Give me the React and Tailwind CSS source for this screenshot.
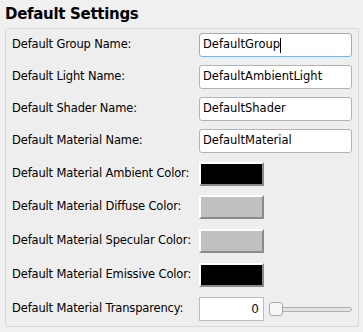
import React from 'react'

const textRows = [
  { label: 'Default Group Name:', value: 'DefaultGroup', focused: true },
  { label: 'Default Light Name:', value: 'DefaultAmbientLight' },
  { label: 'Default Shader Name:', value: 'DefaultShader' },
  { label: 'Default Material Name:', value: 'DefaultMaterial' },
]

const colorRows = [
  { label: 'Default Material Ambient Color:', color: '#000000', mt: 'mt-[9px]' },
  { label: 'Default Material Diffuse Color:', color: '#c0c0c0', mt: 'mt-[9px]' },
  { label: 'Default Material Specular Color:', color: '#c0c0c0', mt: 'mt-[10px]' },
  { label: 'Default Material Emissive Color:', color: '#000000', mt: 'mt-[10px]' },
]

function Row({ label, children, className = '' }) {
  return (
    <div className={`flex h-[24px] items-center ${className}`}>
      <div className="w-[193px] pl-[6px] whitespace-nowrap tracking-[-0.15px]">{label}</div>
      {children}
    </div>
  )
}

export default function App() {
  return (
    <div
      className="w-[363px] h-[332px] bg-[#f0f0f0] text-black overflow-hidden"
      style={{ fontFamily: '"DejaVu Sans", Tahoma, sans-serif' }}
    >
      <h1 className="pl-[5px] pt-[4px] h-[28px] text-[15px] font-bold leading-[20px] tracking-[-0.3px]">
        Default Settings
      </h1>
      <div className="ml-[5px] w-[354px] h-[299px] border border-[#d9d9d9] rounded-[3px] bg-[#eeeeee] pt-[4px] text-[11.5px]">
        {textRows.map((r, i) => (
          <Row key={r.label} label={r.label} className={i === 0 ? '' : 'mt-[8px]'}>
            <div
              className={`w-[153px] h-[24px] bg-white rounded-[3px] border flex items-center pl-[3px] text-[11.5px] ${
                r.focused ? 'border-[#7eb4ea]' : 'border-[#b4b4b4]'
              }`}
            >
              <span>{r.value}</span>
              {r.focused && <span className="w-px h-[15px] bg-black" />}
            </div>
          </Row>
        ))}
        {colorRows.map((r) => (
          <Row key={r.label} label={r.label} className={r.mt}>
            <div
              className="w-[65px] h-[24px] border-t-2 border-l-2 border-b-2 border-r-2 border-t-white border-l-white border-b-[#8a8a8a] border-r-[#8a8a8a]"
              style={{ backgroundColor: r.color }}
            />
          </Row>
        ))}
        <Row label="Default Material Transparency:" className="mt-[10px]">
          <div className="w-[65px] h-[24px] bg-white border border-[#bcbcbc] flex items-center justify-end pr-[4px] text-[12px] text-[#101030]">
            0
          </div>
          <div className="relative ml-[5px] w-[83px] h-[14px] flex items-center">
            <div className="absolute left-[10px] right-0 h-[5px] rounded-full bg-[#e2e2e2] border border-[#b0b0b0]" />
            <div className="relative w-[14px] h-[14px] rounded-[3px] bg-[#f7f7f7] border border-[#a8a8a8]" />
          </div>
        </Row>
      </div>
    </div>
  )
}
